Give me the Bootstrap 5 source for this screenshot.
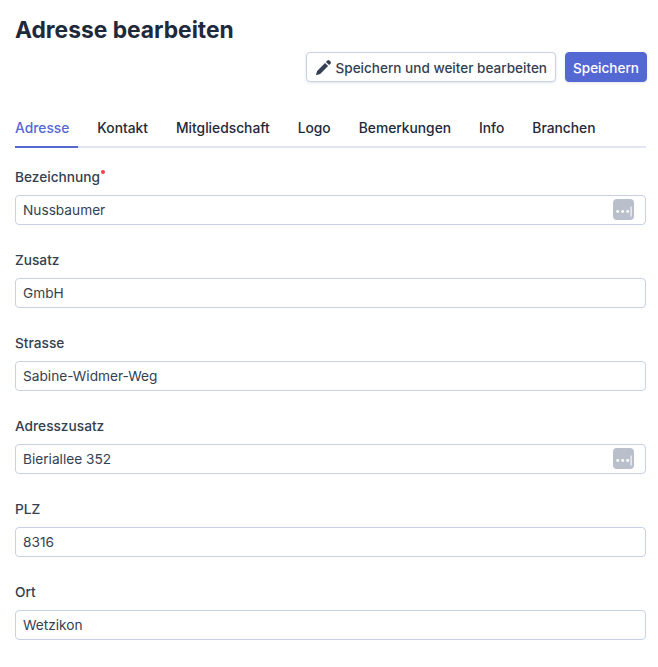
<!DOCTYPE html>
<html lang="de"><head><meta charset="utf-8">
<title>Adresse bearbeiten</title>
<link href="https://cdn.jsdelivr.net/npm/bootstrap@5.3.0/dist/css/bootstrap.min.css" rel="stylesheet">
<style>
html,body{height:667px;overflow:hidden}
body{font-family:Inter,"Liberation Sans",sans-serif;font-size:14px;color:#333f52;background:#fff}
.page-wrap{padding:16px 12px 0 15px}
.page-title{font-size:22.8px;font-weight:700;line-height:28px;color:#1e293b;margin:0}
.action-row{margin-top:8px;margin-right:-1px;gap:9px}
.btn-ghost,.btn-main{font-size:13.55px;font-weight:500;height:30px;padding:1px 7px 0;border-radius:4px;line-height:28px;box-shadow:0 1px 3px rgba(30,50,90,.12)}
.btn-ghost{background:#fff;border:1px solid #c6d2e3;color:#333f52;padding:1px 8px 0 9px;gap:5px}
.btn-main{background:#5468d4;border:1px solid #5468d4;color:#fff}
.tab-row{margin-top:33px;margin-bottom:0;border-bottom:2px solid #e0e5f0;gap:28px;height:33px;list-style:none;padding:0}
.tab-link{display:block;font-size:13.8px;font-weight:500;color:#1e293b;height:33px;line-height:26px;text-decoration:none}
.tab-link.on{color:#5468d4;border-bottom:2px solid #5468d4;padding-right:9px;margin-right:-9px}
.form-area{margin-top:19px}
.field{margin-bottom:25px}
.field-label{display:block;font-size:13.7px;font-weight:500;line-height:20px;color:#333f52;margin:0 0 8px}
.req{display:inline-block;width:4px;height:4px;border-radius:50%;background:#ef4444;vertical-align:top;margin:3px 0 0 1px}
.input-box{height:30px;border:1px solid #c6d2e3;border-radius:4px;font-size:13.7px;color:#333f52;padding:0 7px;box-shadow:none}
.input-holder{position:relative}
.pw-icon{position:absolute;right:12px;top:4px;width:21px;height:21px;background:#b9c0cc;border-radius:4px}
</style></head><body>
<div class="page-wrap">
<h1 class="page-title">Adresse bearbeiten</h1>
<div class="d-flex justify-content-end action-row">
<button type="button" class="btn btn-ghost d-flex align-items-center"><svg width="15" height="15" viewBox="0 0 16 16"><path fill="#333f52" d="M12.1.6a1.6 1.6 0 0 1 2.2 0l1.1 1.1a1.6 1.6 0 0 1 0 2.2L13.9 5.4 10.6 2.1ZM9.6 3.1l3.3 3.3-8.2 8.2c-.3.3-.6.5-1 .6l-3.1.8a.4.4 0 0 1-.5-.5l.8-3.1c.1-.4.3-.7.6-1Z"/></svg><span>Speichern und weiter bearbeiten</span></button>
<button type="button" class="btn btn-main">Speichern</button>
</div>
<ul class="d-flex tab-row">
<li><a class="tab-link on" href="#">Adresse</a></li>
<li><a class="tab-link" href="#">Kontakt</a></li>
<li><a class="tab-link" href="#">Mitgliedschaft</a></li>
<li><a class="tab-link" href="#">Logo</a></li>
<li><a class="tab-link" href="#">Bemerkungen</a></li>
<li><a class="tab-link" href="#">Info</a></li>
<li><a class="tab-link" href="#">Branchen</a></li>
</ul>
<form class="form-area">
<div class="field"><label class="field-label">Bezeichnung<span class="req"></span></label><div class="input-holder"><input class="form-control input-box" value="Nussbaumer"><span class="pw-icon"><svg width="21" height="21" viewBox="0 0 21 21"><g fill="#fff"><circle cx="4.7" cy="10.5" r="1.4"/><circle cx="9.7" cy="10.5" r="1.4"/><circle cx="14.7" cy="10.5" r="1.4"/><rect x="17.6" y="5.5" width="1" height="10"/></g></svg></span></div></div>
<div class="field"><label class="field-label">Zusatz</label><input class="form-control input-box" value="GmbH"></div>
<div class="field"><label class="field-label">Strasse</label><input class="form-control input-box" value="Sabine-Widmer-Weg"></div>
<div class="field"><label class="field-label">Adresszusatz</label><div class="input-holder"><input class="form-control input-box" value="Bierialle&#101; 352"><span class="pw-icon"><svg width="21" height="21" viewBox="0 0 21 21"><g fill="#fff"><circle cx="4.7" cy="10.5" r="1.4"/><circle cx="9.7" cy="10.5" r="1.4"/><circle cx="14.7" cy="10.5" r="1.4"/><rect x="17.6" y="5.5" width="1" height="10"/></g></svg></span></div></div>
<div class="field"><label class="field-label">PLZ</label><input class="form-control input-box" value="8316"></div>
<div class="field"><label class="field-label">Ort</label><input class="form-control input-box" value="Wetzikon"></div>
</form>
</div>
<script src="https://cdn.jsdelivr.net/npm/bootstrap@5.3.0/dist/js/bootstrap.bundle.min.js"></script>
</body></html>
